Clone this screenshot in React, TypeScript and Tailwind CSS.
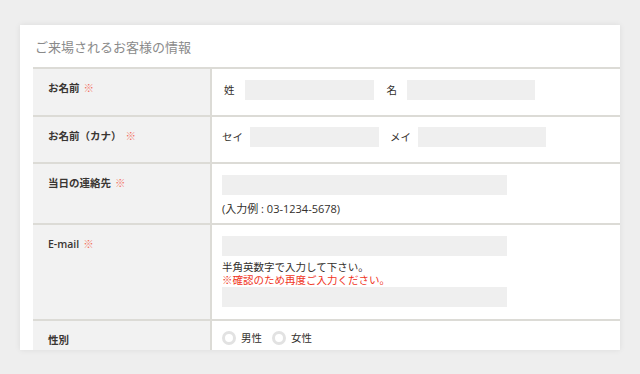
import React from "react";

const font = { fontFamily: '"Open Sans", "Noto Sans CJK JP", sans-serif' };

function Req() {
  return <span className="ml-[4px] font-normal text-[#f2705f]">※</span>;
}

function Input({ w }: { w: string }) {
  return <div className={`h-[20px] bg-[#efefef] ${w}`} />;
}

function Row({
  label,
  req,
  children,
  cls,
}: {
  label: string;
  req?: boolean;
  children: React.ReactNode;
  cls: string;
}) {
  return (
    <div className="flex border-t-2 border-[#dcdbd6]">
      <div className="w-[177px] shrink-0 bg-[#f2f2f2] pl-[15px] pt-[12px] text-[10.5px] font-semibold leading-[14px] text-[#3a3633]">
        {label}
        {req && <Req />}
      </div>
      <div className="w-[2px] shrink-0 bg-[#dcdbd6]" />
      <div className={`flex-1 pl-[10px] text-[10.5px] text-[#332f2c] ${cls}`}>{children}</div>
    </div>
  );
}

function Radio({ label }: { label: string }) {
  return (
    <div className="flex items-center">
      <div className="h-[14px] w-[14px] rounded-full border-[3px] border-[#e2e2e2] bg-white" />
      <span className="ml-[5px] leading-[13px]">{label}</span>
    </div>
  );
}

export default function App() {
  return (
    <div className="h-[374px] w-[640px] overflow-hidden bg-[#eeeeee] pt-[25px] pl-[20px]" style={font}>
      <div className="h-[325px] w-[600px] overflow-hidden bg-white pl-[13px] shadow-[0_0_6px_rgba(0,0,0,0.08)]">
        <div className="pl-[2px] pt-[13px] pb-[11px] text-[13px] leading-[18px] text-[#8a8a8a]">
          ご来場されるお客様の情報
        </div>
        <div className="flex flex-col">
          <Row label="お名前" req cls="pt-[11px] pb-[15px]">
            <div className="flex items-center">
              <span className="ml-[2px] mr-[10px] leading-[20px]">姓</span>
              <Input w="w-[129px]" />
              <span className="ml-[13px] mr-[10px] leading-[20px]">名</span>
              <Input w="w-[128px]" />
            </div>
          </Row>
          <Row label="お名前（カナ）" req cls="pt-[10px] pb-[15px]">
            <div className="flex items-center">
              <span className="mr-[7px] leading-[20px]">セイ</span>
              <Input w="w-[129px]" />
              <span className="ml-[11px] mr-[7px] leading-[20px]">メイ</span>
              <Input w="w-[128px]" />
            </div>
          </Row>
          <Row label="当日の連絡先" req cls="pt-[11px] pb-[8px]">
            <Input w="w-[285px]" />
            <div className="mt-[7px] text-[11px] leading-[13px]">(入力例 : 03-1234-5678)</div>
          </Row>
          <Row label="E-mail" req cls="pt-[11px] pb-[12px]">
            <Input w="w-[285px]" />
            <div className="mt-[5px] leading-[13px]">半角英数字で入力して下さい。</div>
            <div className="leading-[13px] text-[#f0341c]">※確認のため再度ご入力ください。</div>
            <Input w="w-[285px]" />
          </Row>
          <Row label="性別" cls="pt-[10px] pb-[20px]">
            <div className="flex items-center gap-[10px]">
              <Radio label="男性" />
              <Radio label="女性" />
            </div>
          </Row>
        </div>
      </div>
    </div>
  );
}
